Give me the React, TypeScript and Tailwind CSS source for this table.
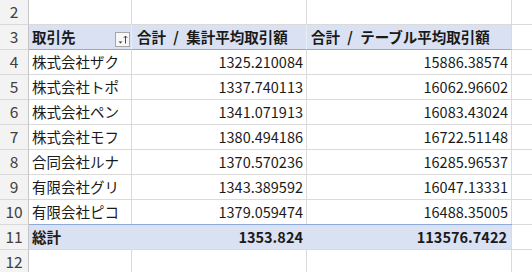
import React from 'react';

const rows = [
  { name: '株式会社ザク', avg: '1325.210084', tbl: '15886.38574' },
  { name: '株式会社トポ', avg: '1337.740113', tbl: '16062.96602' },
  { name: '株式会社ペン', avg: '1341.071913', tbl: '16083.43024' },
  { name: '株式会社モフ', avg: '1380.494186', tbl: '16722.51148' },
  { name: '合同会社ルナ', avg: '1370.570236', tbl: '16285.96537' },
  { name: '有限会社グリ', avg: '1343.389592', tbl: '16047.13331' },
  { name: '有限会社ピコ', avg: '1379.059474', tbl: '16488.35005' },
];

const font = { fontFamily: '"Noto Sans CJK JP", "Noto Sans", sans-serif' };

function RowNum({ n }: { n: number }) {
  return (
    <div className="w-[29px] shrink-0 h-full flex items-center justify-center bg-[#f3f3f3] border-r border-b border-r-[#c6c6c6] border-b-[#d9d9d9] text-[#404040] text-[15.5px]">
      {n}
    </div>
  );
}

function FilterButton() {
  return (
    <div className="absolute right-[1px] top-[7px] w-[15px] h-[15px] border border-[#a6a6a6] bg-[#f7f7f7]">
      <svg width="13" height="13" viewBox="0 0 13 13" className="block">
        <path d="M2.5 8.5 L6.5 8.5 L4.5 10.5 Z" fill="#444" />
        <path d="M9.5 3 L9.5 10.5" stroke="#444" strokeWidth="1" />
        <path d="M7.8 4.8 L9.5 3 L11.2 4.8" stroke="#444" strokeWidth="1" fill="none" />
      </svg>
    </div>
  );
}

export default function App() {
  return (
    <div className="w-[532px] h-[272px] overflow-hidden bg-white text-[14.5px] text-[#1a1a1a]" style={font}>
      {/* row 2 */}
      <div className="flex h-[25px]">
        <RowNum n={2} />
        <div className="w-[103px] shrink-0 border-r border-b border-[#dadada]" />
        <div className="w-[175px] shrink-0 border-r border-b border-[#dadada]" />
        <div className="w-[205px] shrink-0 border-r border-b border-[#dadada]" />
        <div className="flex-1 border-b border-[#dadada]" />
      </div>

      {/* row 3 header */}
      <div className="flex h-[25px]">
        <RowNum n={3} />
        <div className="relative w-[103px] shrink-0 bg-[#d9e1f2] border-r border-r-[#e9edf6] border-b border-b-[#8ea9db] flex items-center pl-[3px] font-bold">
          取引先
          <FilterButton />
        </div>
        <div className="w-[175px] shrink-0 bg-[#d9e1f2] border-r border-r-[#e9edf6] border-b border-b-[#8ea9db] flex items-center pl-[5px] font-bold whitespace-nowrap [word-spacing:4px]">
          合計 / 集計平均取引額
        </div>
        <div className="w-[205px] shrink-0 bg-[#d9e1f2] border-r border-r-[#dadada] border-b border-b-[#8ea9db] flex items-center pl-[4px] font-bold whitespace-nowrap [word-spacing:4px]">
          合計 / テーブル平均取引額
        </div>
        <div className="flex-1 border-b border-[#dadada]" />
      </div>

      {rows.map((r, i) => (
        <div key={r.name} className="flex h-[25px]">
          <RowNum n={i + 4} />
          <div className="w-[103px] shrink-0 border-r border-b border-[#dadada] flex items-center pl-[3px] whitespace-nowrap">
            {r.name}
          </div>
          <div className="w-[175px] shrink-0 border-r border-b border-[#dadada] flex items-center justify-end pr-[3px]">
            {r.avg}
          </div>
          <div className="w-[205px] shrink-0 border-r border-b border-[#dadada] flex items-center justify-end pr-[3px]">
            {r.tbl}
          </div>
          <div className="flex-1 border-b border-[#dadada]" />
        </div>
      ))}

      {/* row 11 totals */}
      <div className="flex h-[25px]">
        <RowNum n={11} />
        <div className="flex w-[483px] shrink-0 bg-[#d9e1f2] border-t border-t-[#8ea9db] border-b border-b-[#dadada] font-bold -mt-px">
          <div className="w-[103px] shrink-0 flex items-center pl-[3px]">総計</div>
          <div className="w-[175px] shrink-0 flex items-center justify-end pr-[4px]">1353.824</div>
          <div className="w-[205px] shrink-0 flex items-center justify-end pr-[4px] border-r border-r-[#dadada]">113576.7422</div>
        </div>
        <div className="flex-1 border-b border-[#dadada]" />
      </div>

      {/* row 12 */}
      <div className="flex h-[25px]">
        <RowNum n={12} />
        <div className="w-[103px] shrink-0 border-r border-b border-[#dadada]" />
        <div className="w-[175px] shrink-0 border-r border-b border-[#dadada]" />
        <div className="w-[205px] shrink-0 border-r border-b border-[#dadada]" />
        <div className="flex-1 border-b border-[#dadada]" />
      </div>
    </div>
  );
}
